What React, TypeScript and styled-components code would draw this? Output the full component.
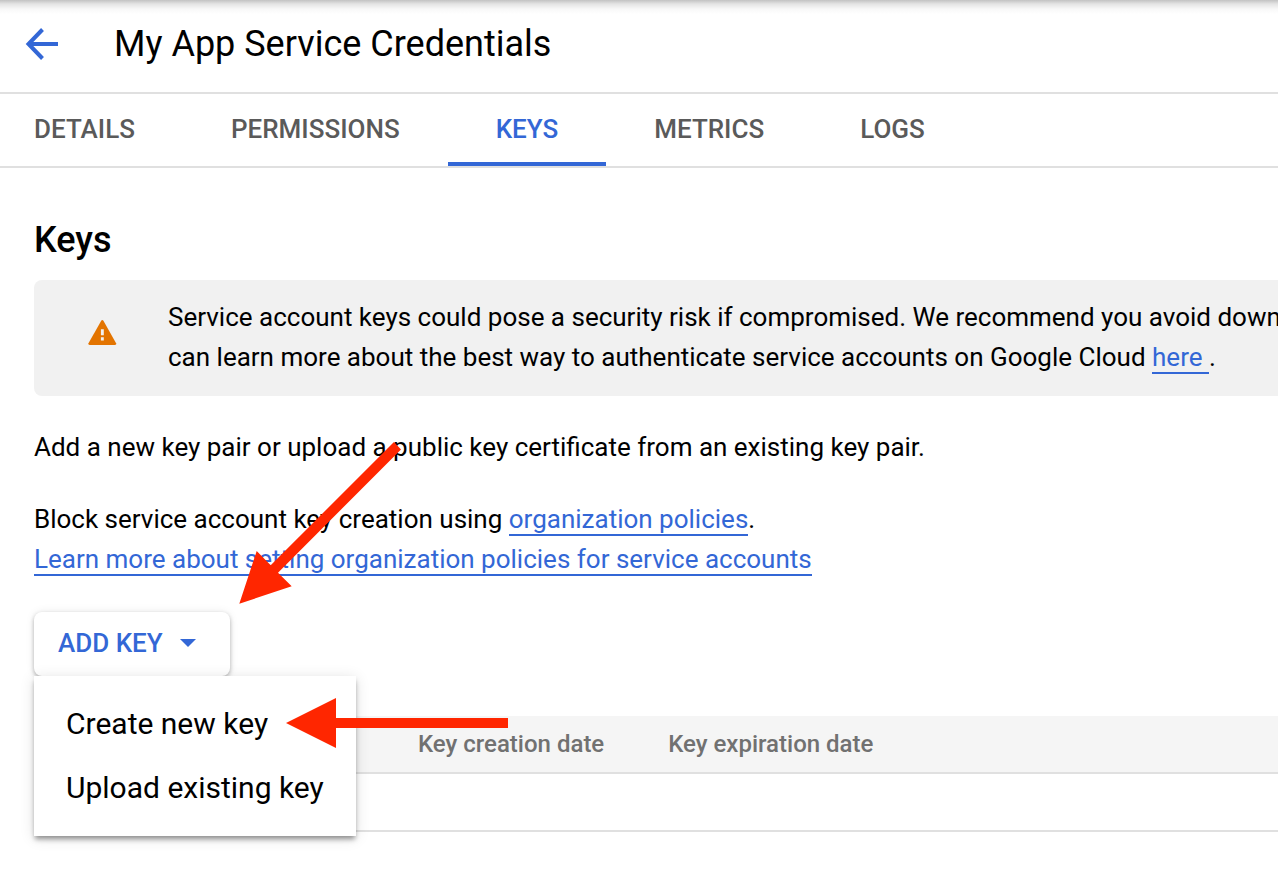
import React from "react";
import styled, { createGlobalStyle } from "styled-components";

const blue = "#3367d6";
const rule = "#e0e0e0";
const red = "#ff2600";

const GlobalStyle = createGlobalStyle`
  *, *::before, *::after { box-sizing: border-box; }
  body {
    margin: 0;
    background: #fff;
    color: #000;
    font: 400 26px/40px Roboto, "Liberation Sans", sans-serif;
  }
`;

const Header = styled.header`
  display: flex;
  align-items: center;
  gap: 48px;
  height: 94px;
  padding: 0 18px 4px;
  border-bottom: 2px solid ${rule};
  background: linear-gradient(#c2c2c2, #e4e4e4 4px, #f8f8f8 9px, #fff 14px);
`;

const BackButton = styled.button`
  display: flex;
  align-items: center;
  justify-content: center;
  width: 48px;
  height: 48px;
  padding: 0;
  border: 0;
  background: none;
  color: ${blue};
  cursor: pointer;
`;

const Title = styled.h1`
  margin: 0;
  font-size: 36px;
  line-height: 48px;
  font-weight: 400;
`;

const Tabs = styled.nav`
  display: flex;
  height: 74px;
  border-bottom: 2px solid ${rule};
`;

const Tab = styled.a<{ $active?: boolean }>`
  padding: 15px 48px 0;
  border-bottom: 4px solid ${(p) => (p.$active ? blue : "transparent")};
  color: ${(p) => (p.$active ? blue : "#5a5a5a")};
  font-weight: 500;
  text-decoration: none;

  &:first-child {
    padding-left: 34px;
  }
`;

const Content = styled.main`
  padding: 48px 0 64px 34px;
`;

const SectionTitle = styled.h2`
  margin: 0 0 16px;
  font-size: 36px;
  line-height: 48px;
  font-weight: 500;
`;

const Alert = styled.div`
  display: flex;
  align-items: flex-start;
  gap: 50px;
  padding: 17px 0 19px 52px;
  border-radius: 8px 0 0 8px;
  background: #f1f1f1;
  overflow: hidden;
`;

const AlertText = styled.p`
  margin: 0;
  white-space: nowrap;
`;

const WarningIcon = styled.svg`
  flex: none;
  width: 32px;
  height: 32px;
  margin-top: 19px;
`;

const Copy = styled.div`
  display: grid;
  gap: 32px;
  padding: 31px 0 33px;
`;

const Paragraph = styled.p`
  margin: 0;
`;

const TextLink = styled.a`
  border-bottom: 2px solid ${blue};
  color: ${blue};
  text-decoration: none;
`;

const MenuAnchor = styled.div`
  position: relative;
  width: fit-content;
`;

const AddKeyButton = styled.button`
  display: flex;
  align-items: center;
  gap: 17px;
  height: 64px;
  padding: 0 34px 2px 24px;
  border: 0;
  border-radius: 8px;
  background: #fff;
  box-shadow: 0 2px 4px rgba(0, 0, 0, 0.28), 0 0 10px rgba(0, 0, 0, 0.08);
  color: ${blue};
  font: inherit;
  font-weight: 500;
  cursor: pointer;
`;

const Menu = styled.div`
  position: absolute;
  z-index: 1;
  top: 100%;
  left: 0;
  padding: 16px 0;
  background: #fff;
  box-shadow: 0 4px 5px -1px rgba(0, 0, 0, 0.4), 0 2px 14px rgba(0, 0, 0, 0.12);
`;

const MenuItem = styled.button`
  display: block;
  width: 100%;
  height: 64px;
  padding: 0 32px;
  border: 0;
  background: none;
  color: #000;
  font: inherit;
  font-size: 30px;
  text-align: left;
  white-space: nowrap;
  cursor: pointer;
`;

const ButtonPointer = styled.svg`
  position: absolute;
  z-index: 2;
  bottom: 70px;
  left: 200px;
  width: 172px;
  height: 166px;
  pointer-events: none;
`;

const ItemPointer = styled.svg`
  position: absolute;
  z-index: 2;
  top: 86px;
  left: 252px;
  width: 222px;
  height: 50px;
  pointer-events: none;
`;

const KeyTable = styled.table`
  width: 100%;
  margin-top: 40px;
  border-collapse: separate;
  border-spacing: 0;
  font-size: 24px;
`;

const HeadCell = styled.th<{ $width?: string }>`
  width: ${(p) => p.$width ?? "auto"};
  height: 58px;
  padding: 0 32px;
  border-bottom: 2px solid ${rule};
  background: #f5f5f5;
  color: #717171;
  font-weight: 500;
  text-align: left;
  white-space: nowrap;
`;

const Cell = styled.td`
  height: 58px;
  padding: 0 32px;
  border-bottom: 2px solid ${rule};
`;

const tabs = ["DETAILS", "PERMISSIONS", "KEYS", "METRICS", "LOGS"];

export default function App() {
  return (
    <>
      <GlobalStyle />
      <Header>
        <BackButton aria-label="Back">
          <svg width="34" height="34" viewBox="0 0 34 34" fill="none" stroke="currentColor" strokeWidth="4">
            <path d="M33 17H4M17.5 2.5 3.5 17l14 14.5" />
          </svg>
        </BackButton>
        <Title>My App Service Credentials</Title>
      </Header>
      <Tabs>
        {tabs.map((name) => (
          <Tab key={name} href={`#${name.toLowerCase()}`} $active={name === "KEYS"}>
            {name}
          </Tab>
        ))}
      </Tabs>
      <Content>
        <SectionTitle>Keys</SectionTitle>
        <Alert>
          <WarningIcon viewBox="0 0 32 32" aria-hidden="true">
            <path
              d="M15.2 4.700 2.500 27.200Q1.900 29 3.700 29H28.900Q30.700 29 30.100 27.200L17.400 4.700Q16.300 3.300 15.200 4.700Z"
              fill="#e37400"
            />
            <path d="M14.900 13.200h2.900v6h-2.900zM14.900 21.300h2.900v3.300h-2.900z" fill="#f1f1f1" />
          </WarningIcon>
          <AlertText>
            Service account keys could pose a security risk if compromised. We recommend you avoid downloading
            <br />
            can learn more about the best way to authenticate service accounts on Google Cloud{" "}
            <TextLink href="#here">here </TextLink>.
          </AlertText>
        </Alert>
        <Copy>
          <Paragraph>Add a new key pair or upload a public key certificate from an existing key pair.</Paragraph>
          <Paragraph>
            Block service account key creation using <TextLink href="#policies">organization policies</TextLink>.
            <br />
            <TextLink href="#learn-more">Learn more about setting organization policies for service accounts</TextLink>
          </Paragraph>
        </Copy>
        <MenuAnchor>
          <AddKeyButton aria-haspopup="menu" aria-expanded="true">
            ADD KEY
            <svg width="16" height="8" viewBox="0 0 16 8" fill="currentColor" aria-hidden="true">
              <path d="M0 0h16L8 8z" />
            </svg>
          </AddKeyButton>
          <Menu role="menu">
            <MenuItem role="menuitem">Create new key</MenuItem>
            <MenuItem role="menuitem">Upload existing key</MenuItem>
          </Menu>
          <ButtonPointer viewBox="0 0 172 166" fill={red} aria-hidden="true">
            <path d="M5.300 163.700 22.700 111 36.700 125.300 160 2 167 9.500 44 132.700 57.700 146.300Z" />
          </ButtonPointer>
          <ItemPointer viewBox="0 0 222 50" fill={red} aria-hidden="true">
            <path d="M0 25 50 0V20H222V30H50V50Z" />
          </ItemPointer>
        </MenuAnchor>
        <KeyTable>
          <thead>
            <tr>
              <HeadCell $width="352px" aria-label="Key" />
              <HeadCell $width="250px">Key creation date</HeadCell>
              <HeadCell>Key expiration date</HeadCell>
            </tr>
          </thead>
          <tbody>
            <tr>
              <Cell />
              <Cell />
              <Cell />
            </tr>
          </tbody>
        </KeyTable>
      </Content>
    </>
  );
}
